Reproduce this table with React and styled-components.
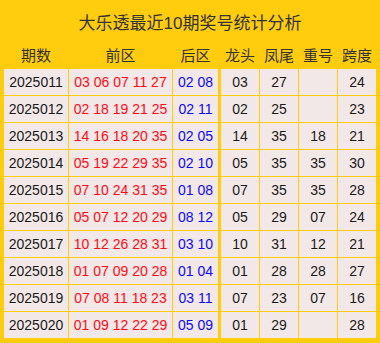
import React from 'react';
import styled, { createGlobalStyle } from 'styled-components';

const GlobalStyle = createGlobalStyle`
    html, body {
        margin: 0;
        padding: 0;
        background: #ffffff;
    }
`;

const Board = styled.div`
    width: 380px;
    height: 343px;
    box-sizing: border-box;
    background: #ffcc0e;
    padding: 0 4px 4px;
    display: flex;
    flex-direction: column;
    font-family: "Liberation Sans", Arial, "Noto Sans CJK SC", sans-serif;
`;

const Title = styled.div`
    height: 40px;
    padding-top: 2px;
    box-sizing: border-box;
    display: flex;
    align-items: center;
    justify-content: center;
    font-size: 17px;
    color: #333333;
`;

const Table = styled.div`
    display: grid;
    grid-template-columns: 64px 103px 47px 38px 38px 38px 38px;
    grid-auto-rows: 26px;
    grid-template-rows: 28px;
    column-gap: 1px;
    row-gap: 1px;
`;

const Head = styled.div`
    display: flex;
    align-items: center;
    justify-content: center;
    font-size: 15px;
    color: #333333;
    margin-right: ${props => props.divider ? '2px' : '0'};
`;

const Cell = styled.div`
    display: flex;
    align-items: center;
    justify-content: center;
    background: #f3e8e8;
    font-size: 14px;
    white-space: pre;
    color: ${props => props.tone === 'red' ? '#ff0a14' : props.tone === 'blue' ? '#0a0aff' : '#1a1a1a'};
    margin-right: ${props => props.divider ? '2px' : '0'};
`;

const heads = ['期数', '前区', '后区', '龙头', '凤尾', '重号', '跨度'];

const rows = [
    ['2025011', '03 06 07 11 27', '02 08', '03', '27', '', '24'],
    ['2025012', '02 18 19 21 25', '02 11', '02', '25', '', '23'],
    ['2025013', '14 16 18 20 35', '02 05', '14', '35', '18', '21'],
    ['2025014', '05 19 22 29 35', '02 10', '05', '35', '35', '30'],
    ['2025015', '07 10 24 31 35', '01 08', '07', '35', '35', '28'],
    ['2025016', '05 07 12 20 29', '08 12', '05', '29', '07', '24'],
    ['2025017', '10 12 26 28 31', '03 10', '10', '31', '12', '21'],
    ['2025018', '01 07 09 20 28', '01 04', '01', '28', '28', '27'],
    ['2025019', '07 08 11 18 23', '03 11', '07', '23', '07', '16'],
    ['2025020', '01 09 12 22 29', '05 09', '01', '29', '', '28'],
];

const tones = [null, 'red', 'blue', null, null, null, null];

export default function App() {
    return (
        <>
            <GlobalStyle />
            <Board>
                <Title>大乐透最近10期奖号统计分析</Title>
                <Table>
                    {heads.map((h, i) => (
                        <Head key={h} divider={i === 2}>{h}</Head>
                    ))}
                    {rows.map(row => row.map((v, i) => (
                        <Cell key={row[0] + i} tone={tones[i]} divider={i === 2}>{v}</Cell>
                    )))}
                </Table>
            </Board>
        </>
    );
}
